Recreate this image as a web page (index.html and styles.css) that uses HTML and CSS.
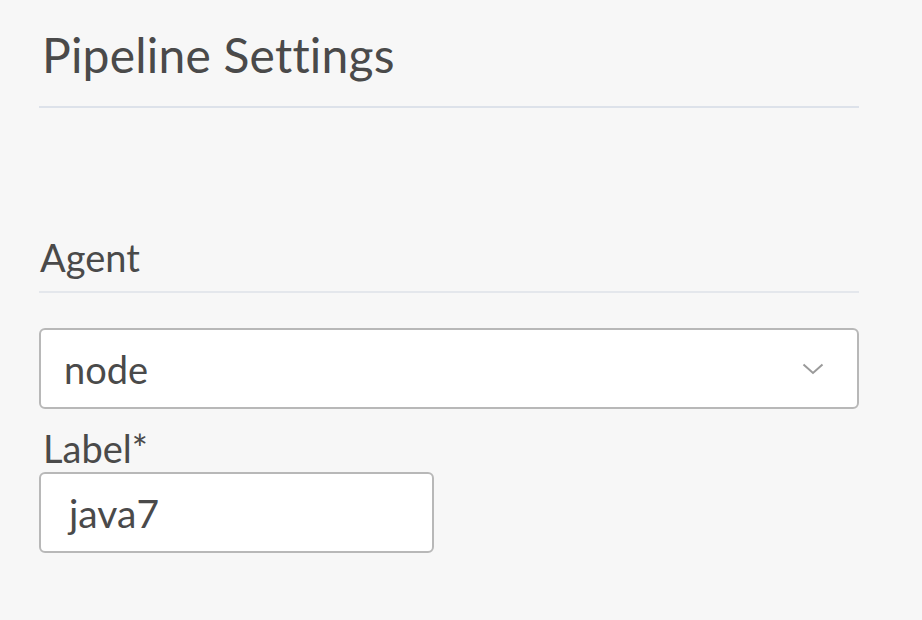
FILE: index.html
```html
<!DOCTYPE html>
<html>
<head>
<meta charset="utf-8">
<link rel="stylesheet" href="styles.css">
</head>
<body>
<div class="panel">
  <h1 class="title">Pipeline Settings</h1>
  <section class="section">
    <h2 class="section-title">Agent</h2>
    <div class="select">
      <span class="select-value">node</span>
      <svg class="chevron" width="22" height="12" viewBox="0 0 22 12"><path d="M1.5 1.5 L11 10 L20.5 1.5" fill="none" stroke="#9a9a9a" stroke-width="2"/></svg>
    </div>
    <label class="field-label">Label*</label>
    <div class="input">java7</div>
  </section>
</div>
</body>
</html>
```
FILE: styles.css
```css
html, body {
  margin: 0;
  padding: 0;
  background: #f7f7f7;
  font-family: Lato, "Noto Sans", sans-serif;
  color: #4a4a4a;
}
.panel {
  width: 820px;
  padding: 0 0 0 39px;
}
.title {
  margin: 0;
  padding: 26px 0 0 3px;
  height: 108px;
  box-sizing: border-box;
  font-weight: 400;
  font-size: 48px;
  line-height: 58px;
  letter-spacing: 0.2px;
  border-bottom: 2px solid #dde2ea;
}
.section {
  padding-top: 129px;
}
.section-title {
  margin: 0;
  padding: 0 0 0 1px;
  font-weight: 400;
  font-size: 38px;
  line-height: 40px;
  height: 56px;
  box-sizing: border-box;
  border-bottom: 2px solid #e4e7ec;
}
.select {
  margin-top: 35px;
  height: 81px;
  box-sizing: border-box;
  border: 2px solid #b8b8b8;
  border-radius: 6px;
  background: #fff;
  display: flex;
  align-items: center;
  justify-content: space-between;
  padding: 0 33px 0 23px;
}
.select-value {
  font-size: 38px;
  line-height: 46px;
}
.field-label {
  display: block;
  margin-top: 19px;
  padding-left: 4px;
  font-size: 38px;
  line-height: 40px;
}
.input {
  margin-top: 4px;
  width: 395px;
  height: 81px;
  box-sizing: border-box;
  border: 2px solid #b8b8b8;
  border-radius: 6px;
  background: #fff;
  padding: 0 0 0 28px;
  display: flex;
  align-items: center;
  font-size: 39px;
  line-height: 46px;
}
```
